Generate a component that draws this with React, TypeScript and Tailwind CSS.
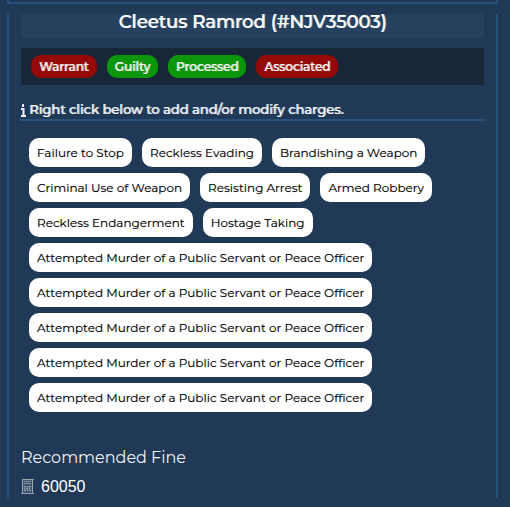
const tags = [
  { label: "Warrant", guilty: true },
  { label: "Guilty", guilty: false },
  { label: "Processed", guilty: false },
  { label: "Associated", guilty: true },
];

const charges = [
  "Failure to Stop",
  "Reckless Evading",
  "Brandishing a Weapon",
  "Criminal Use of Weapon",
  "Resisting Arrest",
  "Armed Robbery",
  "Reckless Endangerment",
  "Hostage Taking",
  "Attempted Murder of a Public Servant or Peace Officer",
  "Attempted Murder of a Public Servant or Peace Officer",
  "Attempted Murder of a Public Servant or Peace Officer",
  "Attempted Murder of a Public Servant or Peace Officer",
  "Attempted Murder of a Public Servant or Peace Officer",
];

function InfoIcon() {
  return (
    <svg className="h-[13px] w-[5px] shrink-0" viewBox="0 0 5 13" fill="#f1f4f7" aria-hidden="true">
      <rect x="1" y="0" width="2" height="3" rx="0.5" />
      <path d="M0 4h3.5v7H5v2H0v-2h1.5V6H0z" />
    </svg>
  );
}

function CalculatorIcon() {
  return (
    <svg className="h-4 w-[13px] shrink-0" viewBox="0 0 13 16" fill="none" stroke="#98a5b3" aria-hidden="true">
      <path d="M1 0h11v14H1z" fill="#3d536c" stroke="none" />
      <path d="M1 .5h12M1.500 0v14M11.500 0v14M0 14.500h13" />
      <path d="M3 2.500h7M3 4.500h7" stroke="#8594a4" />
      <path d="M3 7.500h2M6 7.500h1M8 7.500h2M3 9.500h1M5 9.500h2M8 9.500h1M3 11.500h2M6 11.500h1M8 11.500h2" />
      <path d="M3 8.500h7M3 10.500h7" stroke="#5d7188" />
    </svg>
  );
}

export default function App() {
  return (
    <div className="min-h-screen bg-[#1f3956] pr-3 pb-2.5 pl-[7px] font-['Montserrat','Inter',sans-serif] text-white">
      <div className="h-1 border-x-2 border-b-2 border-[#2a517b]" />
      <main className="mt-2.5 border-x-2 border-[#2a517b] px-3">
        <h1 className="h-6 bg-[#25415e] text-center text-lg leading-4 font-medium whitespace-nowrap [text-shadow:1px_0_0_#ffffffb0]">
          Cleetus Ramrod (#NJV35003)
        </h1>
        <ul className="mt-2.5 flex gap-2.5 bg-[#172737] px-2.5 py-[7px]">
          {tags.map((tag) => (
            <li
              key={tag.label}
              className={`flex h-[23px] items-center rounded-[10px] px-2 text-xs font-medium text-[#f5f5f5] [text-shadow:1px_0_0_#f5f5f5c0] ${
                tag.guilty ? "bg-[#960909]" : "bg-[#0c960c]"
              }`}
            >
              {tag.label}
            </li>
          ))}
        </ul>
        <h2 className="-mx-0.5 mt-4 flex h-5 items-center gap-[3px] border-b-2 border-[#2a517b] px-0.5 text-[13px] font-medium text-[#f1f4f7] [text-shadow:1px_0_0_#f1f4f7c0]">
          <InfoIcon />
          Right click below to add and/or modify charges.
        </h2>
        <ul className="mt-[17px] flex flex-wrap gap-x-2.5 gap-y-1.5 px-2">
          {charges.map((charge, index) => (
            <li
              key={index}
              className="flex h-[29px] items-center rounded-[10px] bg-white px-2 text-xs text-black [text-shadow:0_0_1px_#00000060]"
            >
              {charge}
            </li>
          ))}
        </ul>
        <label htmlFor="fine" className="mt-[34px] block text-base leading-6 text-[#eef1f4]">
          Recommended Fine
        </label>
        <div className="mt-1.5 flex h-[22px] items-center gap-[7px]">
          <CalculatorIcon />
          <input
            id="fine"
            type="text"
            inputMode="numeric"
            defaultValue="60050"
            className="min-w-0 flex-1 bg-transparent font-['Liberation_Sans',Arial,sans-serif] text-base leading-5 text-white outline-none"
          />
        </div>
      </main>
    </div>
  );
}
